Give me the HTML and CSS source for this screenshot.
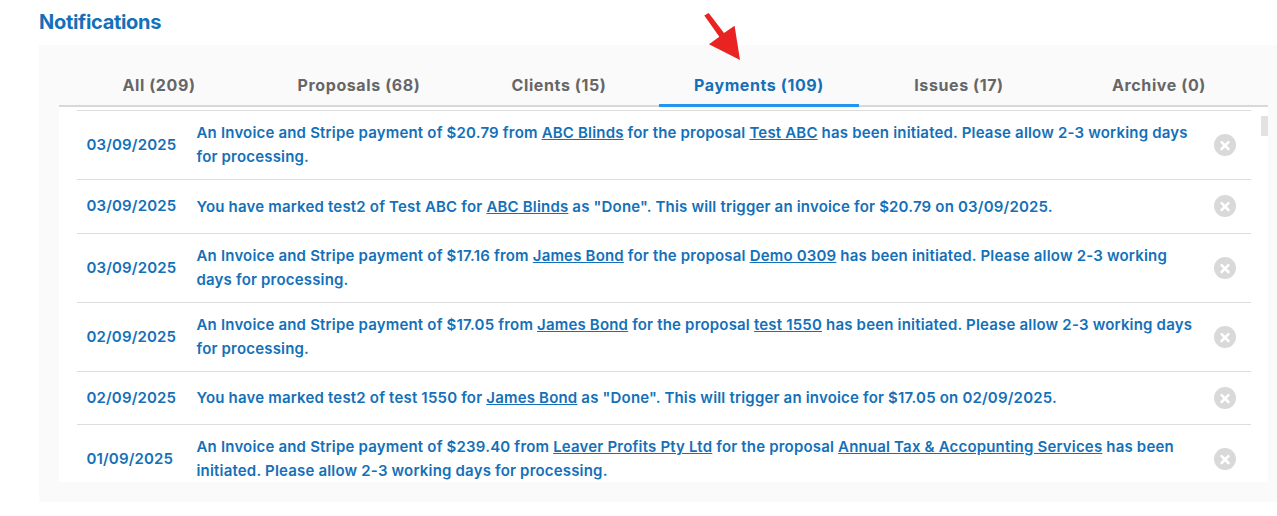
FILE: index.html
```html
<!DOCTYPE html>
<html lang="en">
<head>
<meta charset="UTF-8">
<meta name="viewport" content="width=device-width, initial-scale=1.0">
<title>Notifications</title>
<link rel="stylesheet" href="styles.css">
</head>
<body>
<svg width="0" height="0" class="sprite">
    <symbol id="close" viewBox="0 0 22 22">
        <circle cx="11" cy="11" r="11" fill="#d9d9d9"/>
        <path d="M7.6 8.2l6.8 6.8M14.4 8.2l-6.8 6.8" stroke="#fff" stroke-width="2.6" stroke-linecap="round"/>
    </symbol>
</svg>

<div class="notifications">
    <h1>Notifications</h1>
    <div class="panel">
        <div class="tabs">
            <div class="tab">All (209)</div>
            <div class="tab">Proposals (68)</div>
            <div class="tab">Clients (15)</div>
            <div class="tab active">Payments (109)</div>
            <div class="tab">Issues (17)</div>
            <div class="tab">Archive (0)</div>
        </div>
        <div class="list">
            <div class="row">
                <div class="date">03/09/2025</div>
                <div class="message">An Invoice and Stripe payment of $20.79 from <a href="#">ABC Blinds</a> for the proposal <a href="#">Test ABC</a> has been initiated. Please allow 2-3 working days for processing.</div>
                <svg class="close"><use href="#close"/></svg>
            </div>
            <div class="row">
                <div class="date">03/09/2025</div>
                <div class="message">You have marked test2 of Test ABC for <a href="#">ABC Blinds</a> as "Done". This will trigger an invoice for $20.79 on 03/09/2025.</div>
                <svg class="close"><use href="#close"/></svg>
            </div>
            <div class="row">
                <div class="date">03/09/2025</div>
                <div class="message">An Invoice and Stripe payment of $17.16 from <a href="#">James Bond</a> for the proposal <a href="#">Demo 0309</a> has been initiated. Please allow 2-3 working days for processing.</div>
                <svg class="close"><use href="#close"/></svg>
            </div>
            <div class="row">
                <div class="date">02/09/2025</div>
                <div class="message">An Invoice and Stripe payment of $17.05 from <a href="#">James Bond</a> for the proposal <a href="#">test 1550</a> has been initiated. Please allow 2-3 working days for processing.</div>
                <svg class="close"><use href="#close"/></svg>
            </div>
            <div class="row">
                <div class="date">02/09/2025</div>
                <div class="message">You have marked test2 of test 1550 for <a href="#">James Bond</a> as "Done". This will trigger an invoice for $17.05 on 02/09/2025.</div>
                <svg class="close"><use href="#close"/></svg>
            </div>
            <div class="row">
                <div class="date">01/09/2025</div>
                <div class="message">An Invoice and Stripe payment of $239.40 from <a href="#">Leaver Profits Pty Ltd</a> for the proposal <a href="#">Annual Tax &amp; Accopunting Services</a> has been initiated. Please allow 2-3 working days for processing.</div>
                <svg class="close"><use href="#close"/></svg>
            </div>
            <div class="thumb"></div>
        </div>
    </div>
</div>

<svg class="arrow" viewBox="0 0 36 48">
    <polygon points="0.3,3.6 4.7,1 20,21 30.6,13.8 36,48 5,32.3 15.3,24.7" fill="#e92222"/>
</svg>
</body>
</html>
```

FILE: styles.css
```css
body {
    font-family: Inter, "Liberation Sans", sans-serif;
    margin: 0;
    background-color: #ffffff;
    color: #1470b8;
    height: 516px;
    overflow: hidden;
}

.sprite {
    position: absolute;
}

.notifications {
    padding-left: 39px;
}

h1 {
    margin: 0;
    height: 45px;
    line-height: 44px;
    font-size: 20px;
    font-weight: 700;
    letter-spacing: -0.3px;
}

.panel {
    background-color: #fafafa;
    height: 457px;
    padding: 20px 9px 20px 20px;
    box-sizing: border-box;
}

.tabs {
    display: flex;
    height: 42px;
    box-sizing: border-box;
    border-bottom: 2px solid #d8d8d8;
}

.tab {
    width: 200px;
    height: 42px;
    box-sizing: border-box;
    line-height: 41px;
    text-align: center;
    font-size: 16px;
    font-weight: 700;
    letter-spacing: 0.6px;
    color: #666666;
}

.tab.active {
    color: #1470b8;
    border-bottom: 3px solid #2395ea;
}

.list {
    position: relative;
    height: 375px;
    padding: 3.15px 17px 0 18px;
    box-sizing: border-box;
    overflow: hidden;
    background-color: #ffffff;
}

.row {
    display: flex;
    align-items: center;
    min-height: 53.5px;
    padding: 9.7px 15px 9.7px 9.5px;
    box-sizing: border-box;
    border-top: 1px solid #dddddd;
    font-size: 15px;
    font-weight: 600;
    line-height: 24px;
}

.date {
    width: 110px;
    flex-shrink: 0;
    letter-spacing: 0.15px;
}

.message {
    flex: 1;
    padding-top: 0.6px;
    letter-spacing: 0.185px;
    margin-right: 17px;
}

.message a {
    color: inherit;
}

.close {
    width: 22px;
    height: 22px;
    flex-shrink: 0;
}

.thumb {
    position: absolute;
    top: 9px;
    right: 0;
    width: 7px;
    height: 20px;
    background-color: #e2e2e2;
}

.arrow {
    position: absolute;
    left: 704px;
    top: 12px;
    width: 36px;
    height: 48px;
}
```
